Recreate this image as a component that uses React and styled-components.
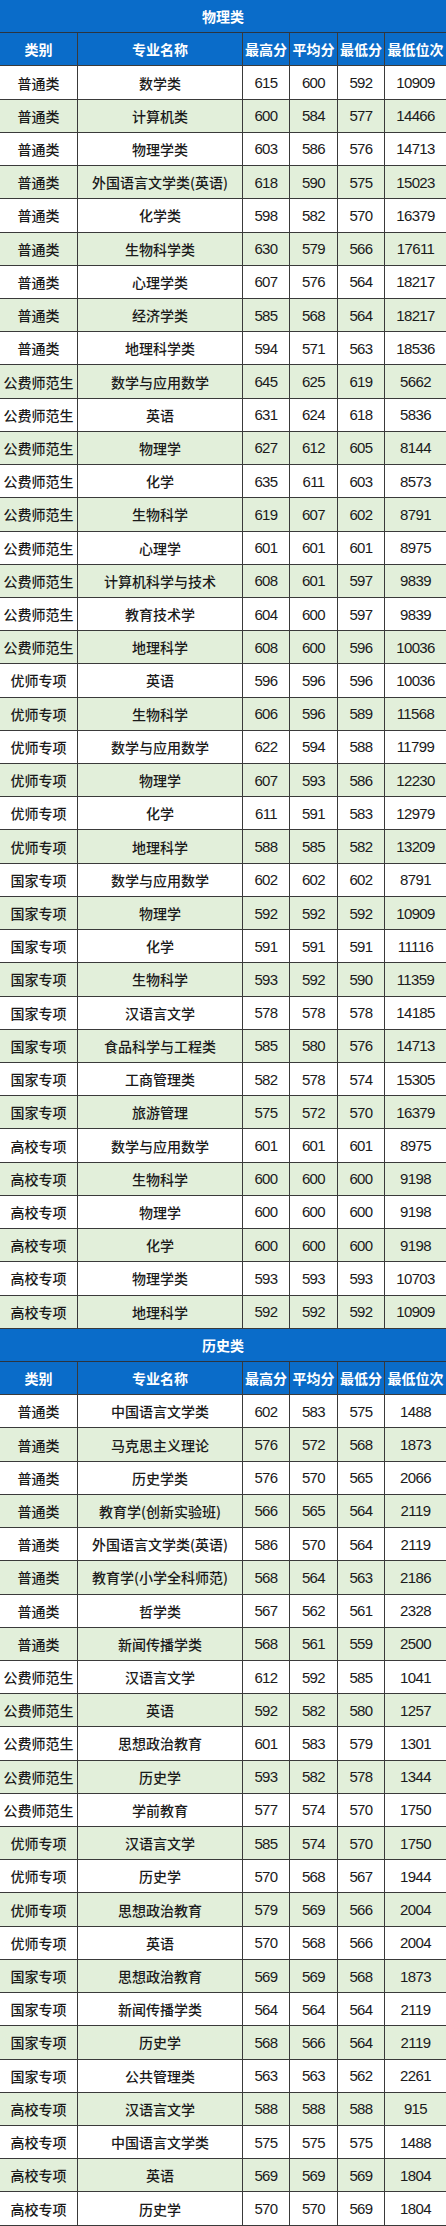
import React from "react";
import styled, { createGlobalStyle } from "styled-components";

const physics = [
  ["普通类", "数学类", 615, 600, 592, 10909],
  ["普通类", "计算机类", 600, 584, 577, 14466],
  ["普通类", "物理学类", 603, 586, 576, 14713],
  ["普通类", "外国语言文学类(英语)", 618, 590, 575, 15023],
  ["普通类", "化学类", 598, 582, 570, 16379],
  ["普通类", "生物科学类", 630, 579, 566, 17611],
  ["普通类", "心理学类", 607, 576, 564, 18217],
  ["普通类", "经济学类", 585, 568, 564, 18217],
  ["普通类", "地理科学类", 594, 571, 563, 18536],
  ["公费师范生", "数学与应用数学", 645, 625, 619, 5662],
  ["公费师范生", "英语", 631, 624, 618, 5836],
  ["公费师范生", "物理学", 627, 612, 605, 8144],
  ["公费师范生", "化学", 635, 611, 603, 8573],
  ["公费师范生", "生物科学", 619, 607, 602, 8791],
  ["公费师范生", "心理学", 601, 601, 601, 8975],
  ["公费师范生", "计算机科学与技术", 608, 601, 597, 9839],
  ["公费师范生", "教育技术学", 604, 600, 597, 9839],
  ["公费师范生", "地理科学", 608, 600, 596, 10036],
  ["优师专项", "英语", 596, 596, 596, 10036],
  ["优师专项", "生物科学", 606, 596, 589, 11568],
  ["优师专项", "数学与应用数学", 622, 594, 588, 11799],
  ["优师专项", "物理学", 607, 593, 586, 12230],
  ["优师专项", "化学", 611, 591, 583, 12979],
  ["优师专项", "地理科学", 588, 585, 582, 13209],
  ["国家专项", "数学与应用数学", 602, 602, 602, 8791],
  ["国家专项", "物理学", 592, 592, 592, 10909],
  ["国家专项", "化学", 591, 591, 591, 11116],
  ["国家专项", "生物科学", 593, 592, 590, 11359],
  ["国家专项", "汉语言文学", 578, 578, 578, 14185],
  ["国家专项", "食品科学与工程类", 585, 580, 576, 14713],
  ["国家专项", "工商管理类", 582, 578, 574, 15305],
  ["国家专项", "旅游管理", 575, 572, 570, 16379],
  ["高校专项", "数学与应用数学", 601, 601, 601, 8975],
  ["高校专项", "生物科学", 600, 600, 600, 9198],
  ["高校专项", "物理学", 600, 600, 600, 9198],
  ["高校专项", "化学", 600, 600, 600, 9198],
  ["高校专项", "物理学类", 593, 593, 593, 10703],
  ["高校专项", "地理科学", 592, 592, 592, 10909],
];

const history = [
  ["普通类", "中国语言文学类", 602, 583, 575, 1488],
  ["普通类", "马克思主义理论", 576, 572, 568, 1873],
  ["普通类", "历史学类", 576, 570, 565, 2066],
  ["普通类", "教育学(创新实验班)", 566, 565, 564, 2119],
  ["普通类", "外国语言文学类(英语)", 586, 570, 564, 2119],
  ["普通类", "教育学(小学全科师范)", 568, 564, 563, 2186],
  ["普通类", "哲学类", 567, 562, 561, 2328],
  ["普通类", "新闻传播学类", 568, 561, 559, 2500],
  ["公费师范生", "汉语言文学", 612, 592, 585, 1041],
  ["公费师范生", "英语", 592, 582, 580, 1257],
  ["公费师范生", "思想政治教育", 601, 583, 579, 1301],
  ["公费师范生", "历史学", 593, 582, 578, 1344],
  ["公费师范生", "学前教育", 577, 574, 570, 1750],
  ["优师专项", "汉语言文学", 585, 574, 570, 1750],
  ["优师专项", "历史学", 570, 568, 567, 1944],
  ["优师专项", "思想政治教育", 579, 569, 566, 2004],
  ["优师专项", "英语", 570, 568, 566, 2004],
  ["国家专项", "思想政治教育", 569, 569, 568, 1873],
  ["国家专项", "新闻传播学类", 564, 564, 564, 2119],
  ["国家专项", "历史学", 568, 566, 564, 2119],
  ["国家专项", "公共管理类", 563, 563, 562, 2261],
  ["高校专项", "汉语言文学", 588, 588, 588, 915],
  ["高校专项", "中国语言文学类", 575, 575, 575, 1488],
  ["高校专项", "英语", 569, 569, 569, 1804],
  ["高校专项", "历史学", 570, 570, 569, 1804],
];

const headers = ["类别", "专业名称", "最高分", "平均分", "最低分", "最低位次"];

const GlobalStyle = createGlobalStyle`
  html, body {
    margin: 0;
    padding: 0;
    background: #ffffff;
  }
  body {
    font-family: "Liberation Sans", "Noto Sans CJK SC", sans-serif;
  }
`;

// 67 rows share the full page height
const ROW_H = "calc(2226px / 67)";

const Sheet = styled.div`
  width: 446px;
  display: flex;
  flex-direction: column;
`;

const SectionTitle = styled.div`
  height: ${ROW_H};
  box-sizing: border-box;
  display: flex;
  align-items: center;
  justify-content: center;
  background: #0a6cc9;
  color: #ffffff;
  font-family: "Noto Sans CJK SC", sans-serif;
  font-size: 14px;
  font-weight: 700;
  border-bottom: 1px solid #2b3440;
`;

const Row = styled.div`
  height: ${ROW_H};
  box-sizing: border-box;
  display: grid;
  grid-template-columns: 77px 165px 47px 48px 47px 62px;
  border-bottom: 1px solid #3a3a3a;
  background: ${({ $head, $striped }) =>
    $head ? "#0a6cc9" : $striped ? "#e2efda" : "#ffffff"};
  color: ${({ $head }) => ($head ? "#ffffff" : "#1a1a1a")};
`;

const Cell = styled.div`
  display: flex;
  align-items: center;
  justify-content: center;
  white-space: nowrap;
  overflow: hidden;
  border-left: ${({ $first }) => ($first ? "none" : "1px solid #3a3a3a")};
  font-family: "Noto Sans CJK SC", sans-serif;
  font-size: 14px;
  font-weight: 500;
`;

const NumCell = styled(Cell)`
  font-family: "Liberation Sans", sans-serif;
  font-size: 15px;
  letter-spacing: -0.6px;
  font-weight: 400;
`;

const HeaderCell = styled(Cell)`
  font-weight: 700;
`;

function Section({ title, rows }) {
  return (
    <>
      <SectionTitle>{title}</SectionTitle>
      <Row $head>
        {headers.map((h, i) => (
          <HeaderCell key={h} $first={i === 0}>
            {h}
          </HeaderCell>
        ))}
      </Row>
      {rows.map((r, idx) => (
        <Row key={idx} $striped={idx % 2 === 1}>
          <Cell $first>{r[0]}</Cell>
          <Cell>{r[1]}</Cell>
          <NumCell>{r[2]}</NumCell>
          <NumCell>{r[3]}</NumCell>
          <NumCell>{r[4]}</NumCell>
          <NumCell>{r[5]}</NumCell>
        </Row>
      ))}
    </>
  );
}

export default function App() {
  return (
    <>
      <GlobalStyle />
      <Sheet>
        <Section title="物理类" rows={physics} />
        <Section title="历史类" rows={history} />
      </Sheet>
    </>
  );
}
